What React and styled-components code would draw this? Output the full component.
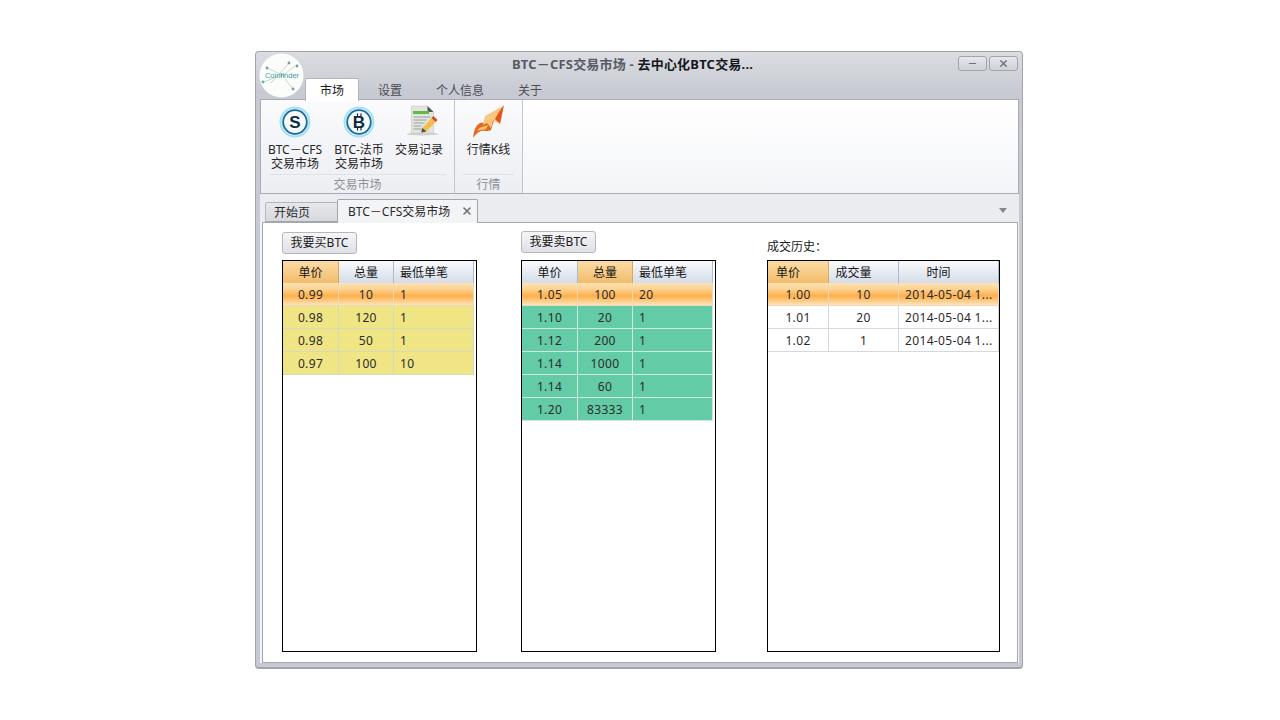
import React from "react";
import styled, { createGlobalStyle } from "styled-components";
import { X, Minus } from "lucide-react";

const GlobalStyle = createGlobalStyle`
    html, body {
        margin: 0;
        background: #ffffff;
        font-family: "Noto Sans", "Noto Sans CJK SC", sans-serif;
        font-size: 12px;
        color: #1c1c1c;
    }
`;

const Page = styled.div`
    padding: 51px 0 0 255px;
    width: 1025px;
    height: 669px;
    overflow: hidden;
`;
const Window = styled.div`
    position: relative;
    width: 768px;
    height: 618px;
    box-sizing: border-box;
    display: flex;
    flex-direction: column;
    background: linear-gradient(#dcdde2 0, #c8cad3 40px, #c6c8d2 100%);
    border: 1px solid #a3a4aa;
    border-bottom-width: 2px;
    border-radius: 4px;
    padding: 0 3px 4px 4px;
`;
const Logo = styled.svg`
    position: absolute;
    left: 3px;
    top: 1px;
`;
const TitleBar = styled.div`
    height: 26px;
    display: flex;
    align-items: center;
    justify-content: center;
    position: relative;
    font-weight: 700;
    font-size: 13px;
    letter-spacing: 0.2px;
    padding: 0 14px 3px 0;
    box-sizing: border-box;
`;
const TitleDim = styled.span`
    color: #565a66;
    white-space: pre;
`;
const TitleStrong = styled.span`
    color: #15171c;
`;
const WindowButtons = styled.div`
    position: absolute;
    right: 1px;
    top: 4px;
    display: flex;
    gap: 2px;
`;
const WindowButton = styled.div`
    width: 29px;
    height: 15px;
    box-sizing: border-box;
    display: flex;
    align-items: center;
    justify-content: center;
    color: #6c6f7a;
    border: 1px solid #a1a3aa;
    border-radius: 3px;
    background: linear-gradient(#e6e7ea, #cfd1d8);
`;
const MenuTabs = styled.div`
    height: 22px;
    display: flex;
    gap: 6px;
    padding-left: 46px;
    position: relative;
    z-index: 1;
`;
const MenuTab = styled.div`
    padding: 0 14px;
    line-height: 23px;
    height: ${(p) => (p.$active ? "22px" : "21px")};
    color: ${(p) => (p.$active ? "#1c1c1c" : "#4a4c54")};
    background: ${(p) => (p.$active ? "#ffffff" : "transparent")};
    border: 1px solid ${(p) => (p.$active ? "#b4b6bd" : "transparent")};
    border-bottom: none;
    border-radius: 2px 2px 0 0;
    margin-left: -1px;
    margin-right: -1px;
`;
const Ribbon = styled.div`
    height: 95px;
    box-sizing: border-box;
    display: flex;
    margin-top: -1px;
    border: 1px solid #a9abb3;
    background: linear-gradient(#ffffff, #f4f5f8);
`;
const Group = styled.div`
    width: ${(p) => p.$width}px;
    box-sizing: border-box;
    display: flex;
    flex-direction: column;
    border-right: 1px solid #c3c5cc;
    background: linear-gradient(#fbfbfd, #eceef2);
`;
const GroupItems = styled.div`
    flex: 1;
    display: flex;
    padding-left: ${(p) => p.$pad}px;
`;
const GroupLabel = styled.div`
    height: 18px;
    margin: 0 8px;
    border-top: 1px solid #dfe1e6;
    line-height: 20px;
    text-align: center;
    color: #8d919a;
`;
const RibbonButton = styled.div`
    width: ${(p) => p.$width}px;
    display: flex;
    flex-direction: column;
    align-items: center;
    padding-top: 4px;
    line-height: 14px;
    text-align: center;
    color: #262626;
    white-space: nowrap;
`;
const RibbonLine = styled.div`
    height: 14px;
`;
const IconSlot = styled.div`
    height: 36px;
    margin-bottom: 3px;
    display: flex;
    align-items: center;
    justify-content: center;
`;
const DocBar = styled.div`
    height: 28px;
    box-sizing: border-box;
    display: flex;
    align-items: flex-end;
    position: relative;
    padding-left: 5px;
    background: #ebecf0;
`;
const DocTab = styled.div`
    box-sizing: border-box;
    display: flex;
    align-items: center;
    justify-content: space-between;
    width: ${(p) => (p.$active ? "141px" : "74px")};
    height: ${(p) => (p.$active ? "24px" : "20px")};
    margin-left: ${(p) => (p.$active ? "-2px" : "0")};
    margin-bottom: ${(p) => (p.$active ? "-1px" : "0")};
    padding: ${(p) => (p.$active ? "0 4px 2px 10px" : "0 8px")};
    border: 1px solid ${(p) => (p.$active ? "#a4a6ad" : "#b4b6bc")};
    border-bottom: ${(p) => (p.$active ? "none" : "1px solid #a4a6ad")};
    border-radius: 2px 2px 0 0;
    background: ${(p) => (p.$active ? "#f3f4f6" : "linear-gradient(#e6e7ea, #d8d9de)")};
    z-index: ${(p) => (p.$active ? 2 : 1)};
    color: #2a2a2a;
`;
const TabClose = styled.span`
    display: flex;
    color: #6f727b;
`;
const DocMenu = styled.div`
    position: absolute;
    right: 12px;
    top: 14px;
    border-left: 4px solid transparent;
    border-right: 4px solid transparent;
    border-top: 5px solid #83868f;
`;
const Frame = styled.div`
    flex: 1;
    background: #f2f3f6;
    padding: 0 1px 0 2px;
    min-height: 0;
`;
const Content = styled.div`
    box-sizing: border-box;
    height: 100%;
    display: flex;
    align-items: flex-end;
    padding: 0 0 10px 19px;
    background: #ffffff;
    border: 1px solid #a6a8af;
`;
const Column = styled.div`
    width: ${(p) => p.$width}px;
    margin-left: ${(p) => p.$gap || 0}px;
    display: flex;
    flex-direction: column;
    align-items: flex-start;
`;
const ActionButton = styled.div`
    width: 75px;
    height: 22px;
    box-sizing: border-box;
    margin-bottom: ${(p) => p.$below}px;
    line-height: 20px;
    text-align: center;
    border: 1px solid #b5b7bd;
    border-radius: 3px;
    background: linear-gradient(#f6f6f8, #dfe0e6);
    color: #202020;
`;
const HistoryLabel = styled.div`
    line-height: 14px;
    margin-bottom: 6px;
    color: #1c1c1c;
`;
const Grid = styled.div`
    width: 100%;
    height: 392px;
    box-sizing: border-box;
    border: 1px solid #000000;
    background: #ffffff;
`;
const Row = styled.div`
    display: grid;
    grid-template-columns: ${(p) => p.$cols};
    height: ${(p) => (p.$head ? "22px" : "23px")};
`;
const HeadCell = styled.div`
    box-sizing: border-box;
    line-height: 23px;
    color: #161616;
    text-align: ${(p) => (p.$left ? "left" : "center")};
    padding-left: ${(p) => (p.$left ? "6px" : "0")};
    padding-right: ${(p) => p.$shift || 0}px;
    border-right: 1px solid ${(p) => (p.$sorted ? "#dca75c" : "#a9bbd2")};
    border-bottom: 1px solid ${(p) => (p.$sorted ? "#dca75c" : "#a9b7c9")};
    background: ${(p) =>
        p.$sorted
            ? "linear-gradient(#fbdca6, #f2bb68)"
            : "linear-gradient(#f9fafc, #d3dbe8)"};
`;
const rowColors = {
    buy: { bg: "#efe585", line: "#d6d9bc" },
    sell: { bg: "#63cba6", line: "#cfe8de" },
    plain: { bg: "#ffffff", line: "#d3d9e3" },
};
const Cell = styled.div`
    box-sizing: border-box;
    line-height: 23px;
    letter-spacing: 0.35px;
    color: #2b2b2b;
    white-space: nowrap;
    overflow: hidden;
    text-align: ${(p) => (p.$left ? "left" : "center")};
    padding-left: ${(p) => (p.$left ? "6px" : "0")};
    border-right: 1px solid ${(p) => (p.$selected ? "#eed9b5" : rowColors[p.$kind].line)};
    border-bottom: 1px solid ${(p) => (p.$selected ? "#eed9b5" : rowColors[p.$kind].line)};
    background: ${(p) =>
        p.$selected
            ? "linear-gradient(#fce3b8 0, #fdd08c 30%, #fdb04e 58%, #fdca80 80%, #fde5bf 100%)"
            : rowColors[p.$kind].bg};
`;

function CoinIcon({ letter, bar }) {
    return (
        <svg width="32" height="32" viewBox="0 0 32 32">
            <circle cx="16" cy="16" r="14.4" fill="#e4f6fc" stroke="#a5e2f6" strokeWidth="2.2" />
            <circle cx="16" cy="16" r="11.8" fill="#f6fcfe" stroke="#1b6a96" strokeWidth="1.8" />
            <text x="16" y="22" textAnchor="middle" fontSize="17" fontWeight="700" fontFamily="Liberation Sans" fill="#0f2a3e">
                {letter}
            </text>
            {bar && <path d="M14.5 7.5v3M18 7.5v3M14.5 21.5v3M18 21.5v3" stroke="#0f2a3e" strokeWidth="1.2" />}
        </svg>
    );
}

function RecordIcon() {
    return (
        <svg width="45" height="42" viewBox="-3.5 0 45 42">
            <ellipse cx="22" cy="33" rx="16" ry="1.5" fill="#cfd1cc" />
            <path d="M11 5h16l6 6v21H11z" fill="#e2e5de" stroke="#bcc0b8" strokeWidth="0.5" />
            <path d="M27 5l6 6h-6z" fill="#4f5a55" />
            <rect x="12.5" y="10" width="16" height="3" fill="#62b944" />
            <path d="M13 16h17M13 19h13M13 22h11M13 25h8M13 28h9" stroke="#98a3a0" strokeWidth="1" />
            <path d="M22 27l9-10 4 4-9 9.5z" fill="#f2bd4a" />
            <path d="M31 17l2-2 4 4-2 2z" fill="#cf4a3a" />
            <path d="M20.5 31.5l1.5-4.5 4 3.5z" fill="#57483a" />
        </svg>
    );
}

function TrendIcon() {
    return (
        <svg width="45" height="42" viewBox="0 0 45 42">
            <path d="M7 37C8 29 10 24 14 22C18 21 20 23 23 20L28 19L25 29C21 31 18 29 15 30C12 31 10 33 7 37Z" fill="#e4691d" />
            <path d="M11 30C13 26 17 26 22 24L20 28C17 29 14 28 11 30Z" fill="#f9c778" />
            <path d="M19 15L37 5L31 22L27 19L25 27L21 22L17 24Z" fill="#f8c67c" />
            <path d="M38 4L34 23L29 18L33 11Z" fill="#e8501a" />
        </svg>
    );
}

function CoinLogo() {
    return (
        <Logo width="45" height="45" viewBox="0 0 45 45">
            <circle cx="22.5" cy="22.5" r="22" fill="#fbfdfb" />
            <path d="M8 15l18 8M30 10L12 30M36 13L22 24M26 26l8 10M4 29l20-7" stroke="#a6d3a8" strokeWidth="0.7" />
            <circle cx="8" cy="15" r="1.4" fill="#7a9aa5" />
            <circle cx="30" cy="10" r="1.4" fill="#7a9aa5" />
            <circle cx="38" cy="13" r="1.4" fill="#7a9aa5" />
            <circle cx="34" cy="36" r="1.4" fill="#7a9aa5" />
            <circle cx="4" cy="29" r="1.4" fill="#5fb8a8" />
            <text x="23" y="25" textAnchor="middle" fontSize="7.5" fontFamily="Liberation Sans" fill="#4a9aa4">
                Coinfinder
            </text>
        </Logo>
    );
}

const grids = [
    {
        kind: "buy",
        cols: "56px 55px 80px",
        sorted: 0,
        head: ["单价", "总量", "最低单笔"],
        rows: [
            ["0.99", "10", "1"],
            ["0.98", "120", "1"],
            ["0.98", "50", "1"],
            ["0.97", "100", "10"],
        ],
    },
    {
        kind: "sell",
        cols: "56px 55px 80px",
        sorted: 1,
        head: ["单价", "总量", "最低单笔"],
        rows: [
            ["1.05", "100", "20"],
            ["1.10", "20", "1"],
            ["1.12", "200", "1"],
            ["1.14", "1000", "1"],
            ["1.14", "60", "1"],
            ["1.20", "83333", "1"],
        ],
    },
    {
        kind: "plain",
        cols: "61px 70px 100px",
        sorted: 0,
        headShift: 20,
        timeTable: true,
        head: ["单价", "成交量", "时间"],
        rows: [
            ["1.00", "10", "2014-05-04 1..."],
            ["1.01", "20", "2014-05-04 1..."],
            ["1.02", "1", "2014-05-04 1..."],
        ],
    },
];

function DataGrid({ data }) {
    return (
        <Grid>
            <Row $head $cols={data.cols}>
                {data.head.map((title, i) => (
                    <HeadCell
                        key={title}
                        $sorted={i === data.sorted}
                        $left={i === 2 && !data.timeTable}
                        $shift={data.headShift}
                    >
                        {title}
                    </HeadCell>
                ))}
            </Row>
            {data.rows.map((row, r) => (
                <Row key={r} $cols={data.cols}>
                    {row.map((value, i) => (
                        <Cell key={i} $kind={data.kind} $selected={r === 0} $left={i === 2}>
                            {value}
                        </Cell>
                    ))}
                </Row>
            ))}
        </Grid>
    );
}

export default function App() {
    return (
        <Page>
            <GlobalStyle />
            <Window>
                <CoinLogo />
                <TitleBar>
                    <TitleDim>BTC－CFS交易市场 - </TitleDim>
                    <TitleStrong>去中心化BTC交易...</TitleStrong>
                    <WindowButtons>
                        <WindowButton>
                            <Minus size={11} strokeWidth={2.4} />
                        </WindowButton>
                        <WindowButton>
                            <X size={11} strokeWidth={3} />
                        </WindowButton>
                    </WindowButtons>
                </TitleBar>
                <MenuTabs>
                    <MenuTab $active>市场</MenuTab>
                    <MenuTab>设置</MenuTab>
                    <MenuTab>个人信息</MenuTab>
                    <MenuTab>关于</MenuTab>
                </MenuTabs>
                <Ribbon>
                    <Group $width={194}>
                        <GroupItems $pad={2}>
                            <RibbonButton $width={64}>
                                <IconSlot>
                                    <CoinIcon letter="S" />
                                </IconSlot>
                                <RibbonLine>BTC－CFS</RibbonLine>
                                <RibbonLine>交易市场</RibbonLine>
                            </RibbonButton>
                            <RibbonButton $width={64}>
                                <IconSlot>
                                    <CoinIcon letter="B" bar />
                                </IconSlot>
                                <RibbonLine>BTC-法币</RibbonLine>
                                <RibbonLine>交易市场</RibbonLine>
                            </RibbonButton>
                            <RibbonButton $width={56}>
                                <IconSlot>
                                    <RecordIcon />
                                </IconSlot>
                                <RibbonLine>交易记录</RibbonLine>
                            </RibbonButton>
                        </GroupItems>
                        <GroupLabel>交易市场</GroupLabel>
                    </Group>
                    <Group $width={68}>
                        <GroupItems $pad={5}>
                            <RibbonButton $width={57}>
                                <IconSlot>
                                    <TrendIcon />
                                </IconSlot>
                                <RibbonLine>行情K线</RibbonLine>
                            </RibbonButton>
                        </GroupItems>
                        <GroupLabel>行情</GroupLabel>
                    </Group>
                </Ribbon>
                <DocBar>
                    <DocTab>开始页</DocTab>
                    <DocTab $active>
                        BTC－CFS交易市场
                        <TabClose>
                            <X size={12} strokeWidth={3.2} />
                        </TabClose>
                    </DocTab>
                    <DocMenu />
                </DocBar>
                <Frame>
                    <Content>
                        <Column $width={195}>
                            <ActionButton $below={6}>我要买BTC</ActionButton>
                            <DataGrid data={grids[0]} />
                        </Column>
                        <Column $width={195} $gap={44}>
                            <ActionButton $below={7}>我要卖BTC</ActionButton>
                            <DataGrid data={grids[1]} />
                        </Column>
                        <Column $width={233} $gap={51}>
                            <HistoryLabel>成交历史：</HistoryLabel>
                            <DataGrid data={grids[2]} />
                        </Column>
                    </Content>
                </Frame>
            </Window>
        </Page>
    );
}
